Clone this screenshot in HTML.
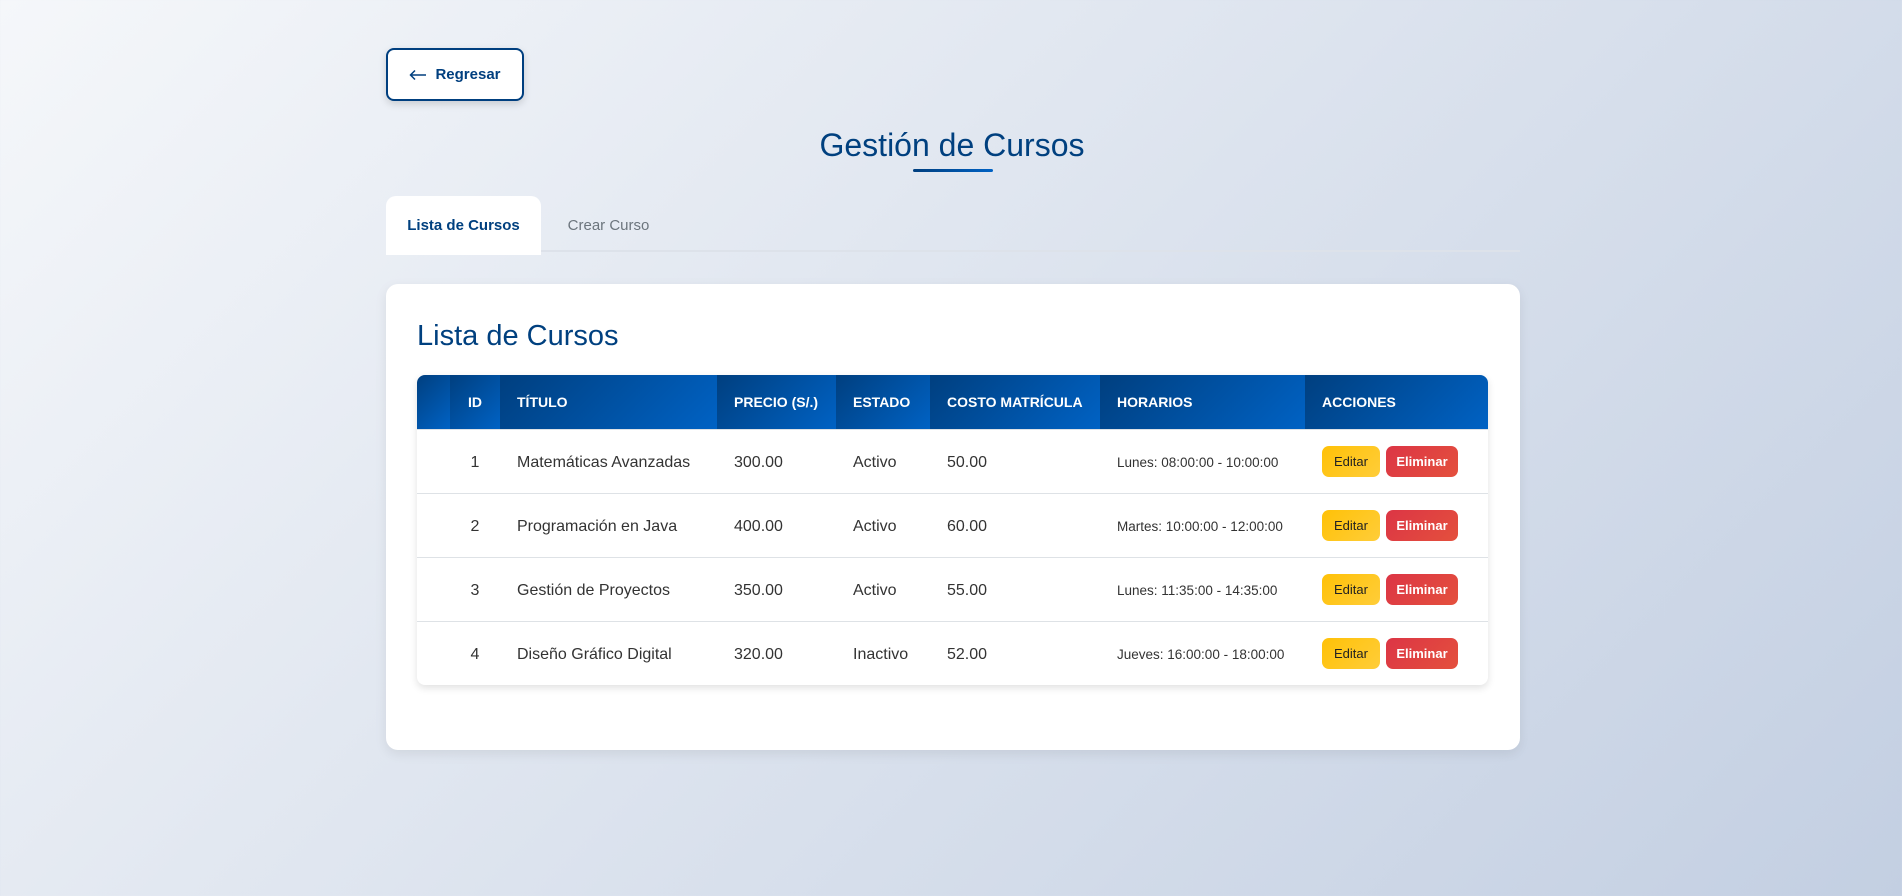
<!DOCTYPE html>
<html><head><meta charset="utf-8"><style>
*{box-sizing:border-box;margin:0;padding:0}
body{width:1902px;height:896px;overflow:hidden;font-family:"Liberation Sans",sans-serif;background:linear-gradient(135deg,#f5f7fa 0%,#c3cfe2 100%);position:relative}
.btn-back{position:absolute;left:386px;top:48px;width:138px;height:53px;border:2px solid #003f7f;border-radius:8px;background:#fff;color:#003f7f;font-size:15px;font-weight:bold;display:flex;align-items:center;justify-content:center;gap:8px;box-shadow:0 3px 8px rgba(0,0,0,.15)}
h1{position:absolute;left:0;width:1904px;top:125px;text-align:center;color:#00407f;font-size:32px;font-weight:normal;line-height:40px}
.ul{position:absolute;left:913px;top:169px;width:80px;height:3px;background:linear-gradient(90deg,#003f7f,#0062c4);border-radius:2px}
.tabline{position:absolute;left:386px;top:250px;width:1134px;height:2px;background:#dde2ea}
.tab{position:absolute;top:196px;height:59px;display:flex;align-items:center;justify-content:center;font-size:15px}
.t1{left:386px;width:155px;background:#fff;border-radius:10px 10px 0 0;color:#00407f;font-weight:bold}
.t2{left:541px;width:135px;color:#6c757d}
.card{position:absolute;left:386px;top:284px;width:1134px;height:466px;background:#fff;border-radius:12px;box-shadow:0 4px 12px rgba(0,0,0,.08)}
h2{position:absolute;left:417px;top:320px;color:#00407f;font-size:29px;font-weight:normal}
table{position:absolute;left:417px;top:375px;width:1071px;border-collapse:collapse;border-radius:8px;overflow:hidden;box-shadow:0 3px 8px rgba(0,0,0,.12);background:#fff}
th{height:54px;background:linear-gradient(135deg,#003f7f,#0062c4);color:#fff;font-size:14px;text-align:left;padding-left:17px;font-weight:bold}
td{height:64px;border-top:1px solid #dee2e6;color:#333;font-size:16px;padding-left:17px;padding-top:3px}
td.c,th.c{text-align:center;padding-left:0}
td.h{font-size:13.5px}
td.a{padding-top:0}
.e,.d{display:inline-block;height:31px;line-height:31px;border-radius:7px;font-size:13px;text-align:center;vertical-align:middle}
.e{width:58px;background:linear-gradient(135deg,#ffc107,#ffcd39);color:#222}
.d{width:72px;margin-left:6px;background:linear-gradient(135deg,#dc3545,#e4503d);color:#fff;font-weight:bold}
</style></head><body>
<div class="btn-back"><svg width="18" height="12" viewBox="0 0 18 12"><path d="M17 6H2M6 1.5L1.5 6 6 10.5" stroke="#003f7f" stroke-width="1.5" fill="none"/></svg>Regresar</div>
<h1>Gestión de Cursos</h1><div class="ul"></div>
<div class="tabline"></div>
<div class="tab t1">Lista de Cursos</div><div class="tab t2">Crear Curso</div>
<div class="card"></div>
<h2>Lista de Cursos</h2>
<table>
<colgroup><col style="width:33px"><col style="width:50px"><col style="width:217px"><col style="width:119px"><col style="width:94px"><col style="width:170px"><col style="width:205px"><col style="width:183px"></colgroup>
<tr><th></th><th class="c">ID</th><th>TÍTULO</th><th>PRECIO (S/.)</th><th>ESTADO</th><th>COSTO MATRÍCULA</th><th>HORARIOS</th><th>ACCIONES</th></tr>
<tr><td></td><td class="c">1</td><td>Matemáticas Avanzadas</td><td>300.00</td><td>Activo</td><td>50.00</td><td class="h">Lunes: 08:00:00 - 10:00:00</td><td class="a"><span class="e">Editar</span><span class="d">Eliminar</span></td></tr>
<tr><td></td><td class="c">2</td><td>Programación en Java</td><td>400.00</td><td>Activo</td><td>60.00</td><td class="h">Martes: 10:00:00 - 12:00:00</td><td class="a"><span class="e">Editar</span><span class="d">Eliminar</span></td></tr>
<tr><td></td><td class="c">3</td><td>Gestión de Proyectos</td><td>350.00</td><td>Activo</td><td>55.00</td><td class="h">Lunes: 11:35:00 - 14:35:00</td><td class="a"><span class="e">Editar</span><span class="d">Eliminar</span></td></tr>
<tr><td></td><td class="c">4</td><td>Diseño Gráfico Digital</td><td>320.00</td><td>Inactivo</td><td>52.00</td><td class="h">Jueves: 16:00:00 - 18:00:00</td><td class="a"><span class="e">Editar</span><span class="d">Eliminar</span></td></tr>
</table>
</body></html>
